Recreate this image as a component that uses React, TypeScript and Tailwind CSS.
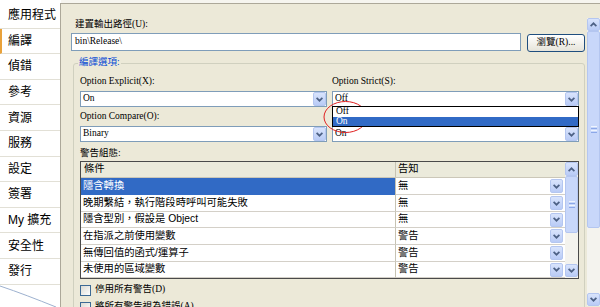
import React from "react";

function Chevron({ up = false }: { up?: boolean }) {
  return (
    <svg width="7" height="5" viewBox="0 0 7 5" className={up ? "rotate-180" : ""}>
      <path d="M0.6 0.8 L3.5 3.7 L6.4 0.8" fill="none" stroke="#4D6185" strokeWidth="1.7" />
    </svg>
  );
}

function ArrowBtn({ up = false, className = "" }: { up?: boolean; className?: string }) {
  return (
    <div
      className={
        "flex shrink-0 items-center justify-center rounded-[2px] border border-[#B4C6F0] bg-linear-to-b from-[#D9E4FC] to-[#B9CBF6] " +
        className
      }
    >
      <Chevron up={up} />
    </div>
  );
}

function Combo({ value, children }: { value: string; children?: React.ReactNode }) {
  return (
    <div className="relative flex h-[16px] items-center border border-[#7F9DB9] bg-white pl-[2px]">
      <span className="flex-1 text-[9.5px] leading-none">{value}</span>
      <ArrowBtn className="h-[14px] w-[13px]" />
      {children}
    </div>
  );
}

function Checkbox({ label }: { label: string }) {
  return (
    <div className="flex h-[14px] shrink-0 items-center gap-[4px]">
      <div className="h-[11px] w-[11px] border border-[#3D6A95] bg-linear-to-br from-[#DCDBD3] to-white" />
      <span className="text-[9.5px] leading-none">{label}</span>
    </div>
  );
}

const tabs = ["應用程式", "編譯", "偵錯", "參考", "資源", "服務", "設定", "簽署", "My 擴充", "安全性", "發行"];

const rows: [string, string][] = [
  ["隱含轉換", "無"],
  ["晚期繫結，執行階段時呼叫可能失敗", "無"],
  ["隱含型別，假設是 Object", "無"],
  ["在指派之前使用變數", "警告"],
  ["無傳回值的函式/運算子", "警告"],
  ["未使用的區域變數", "警告"],
];
const rowH = ["h-[17px]", "h-[17px]", "h-[16px]", "h-[17px]", "h-[17px]", "h-[16px]"];

export default function App() {
  return (
    <div className="relative flex h-[307px] w-[600px] overflow-hidden bg-white font-['Liberation_Serif','Noto_Sans_CJK_TC',serif] text-black">
      {/* Sidebar */}
      <div className="relative w-[61px] shrink-0 bg-white pt-[3px]">
        <div className="h-full border-r border-[#ACA899] font-['Liberation_Sans','Noto_Sans_CJK_TC',sans-serif]">
          {tabs.map((t, i) => (
            <div
              key={t}
              className={
                "flex h-[25.6px] items-center border-b border-[#E2E0D6] text-[12px] leading-none " +
                (i === 1 ? "border-l-[2px] border-l-[#E9A23B] pl-[6px]" : "pl-[8px]")
              }
            >
              {t}
            </div>
          ))}
        </div>
        <svg className="pointer-events-none absolute left-0 top-0" width="61" height="307" viewBox="0 0 61 307">
          <path d="M0 286 C 18 292, 36 299, 56 307" stroke="#9DB1CF" fill="none" />
        </svg>
      </div>

      {/* Content */}
      <div className="flex flex-1 flex-col">
        <div className="h-[3px] shrink-0 bg-[#F6F5EF]" />
        <div className="flex flex-1 overflow-hidden border-t border-[#ACA899] bg-[#ECE9D8]">
          <div className="flex w-[526px] shrink-0 flex-col overflow-hidden pl-[10px] pr-[2px] pt-[13px]">
            <div className="flex h-[15px] shrink-0 items-center pl-[4px] text-[9.5px] leading-none">建置輸出路徑(U):</div>
            <div className="mt-[1px] flex h-[19px] shrink-0 items-start gap-[6px]">
              <div className="flex h-[18px] flex-1 items-center border border-[#7F9DB9] bg-white pl-[3px] text-[9.5px] leading-none">
                bin\Release\
              </div>
              <div className="mt-[1px] flex h-[18px] w-[58px] items-center justify-center rounded-[3px] border border-[#1F4E7E] bg-linear-to-b from-white to-[#E6E4DA] text-[9.5px] leading-none">
                瀏覽(R)...
              </div>
            </div>

            {/* Group box */}
            <div className="relative ml-[2px] mt-[11px] shrink-0 rounded-[3px] border border-[#D0D0BF] pb-[40px] pl-[6px] pr-[5px] pt-[10px]">
              <div className="absolute left-[4px] top-[-9px] flex h-[15px] items-center bg-[#ECE9D8] px-[1px] text-[9.5px] leading-none text-[#0046D5]">
                編譯選項:
              </div>
              <div className="grid grid-cols-2 gap-x-[5px]">
                <div className="flex h-[15px] items-center text-[9.5px] leading-none">Option Explicit(X):</div>
                <div className="flex h-[15px] items-center text-[9.5px] leading-none">Option Strict(S):</div>
                <div className="mt-[2px]">
                  <Combo value="On" />
                </div>
                <div className="mt-[2px]">
                  <Combo value="Off">
                    <div className="absolute left-[-1px] right-[-1px] top-[14px] z-10 flex flex-col border border-black bg-white text-[9.5px] leading-none">
                      <div className="flex h-[10px] items-center pl-[3px]">Off</div>
                      <div className="flex h-[9px] items-center bg-[#316AC5] pl-[3px] text-white">On</div>
                    </div>
                  </Combo>
                </div>
                <div className="mt-[2px] flex h-[15px] items-center text-[9.5px] leading-none">Option Compare(O):</div>
                <div className="mt-[2px]" />
                <div className="mt-[2px]">
                  <Combo value="Binary" />
                </div>
                <div className="mt-[2px]">
                  <Combo value="On" />
                </div>
              </div>

              <div className="mt-[4px] flex h-[15px] items-center text-[9.5px] leading-none">警告組態:</div>

              {/* Table */}
              <div className="flex h-[118px] border border-[#4A4A4A] bg-white font-['Liberation_Sans','Noto_Sans_CJK_TC',sans-serif] text-[10.3px] leading-none">
                <div className="flex flex-1 flex-col">
                  <div className="flex h-[16px] shrink-0 border-b border-[#CBC7B8] bg-[#EBEADB]">
                    <div className="flex w-[315px] items-center border-r border-[#C7C3B3] pl-[3px]">條件</div>
                    <div className="flex flex-1 items-center pl-[2px]">告知</div>
                  </div>
                  {rows.map(([a, b], i) => (
                    <div key={a} className={"flex shrink-0 " + rowH[i]}>
                      <div
                        className={
                          "flex w-[315px] items-center border-r border-[#C7C3B3] pl-[2px] " +
                          (i === 0 ? "bg-[#316AC5] text-white" : "border-b border-b-[#D4D0C8]")
                        }
                      >
                        {a}
                      </div>
                      <div className="flex flex-1 items-center border-b border-[#D4D0C8] pl-[2px] pr-[2px]">
                        <span className="flex-1">{b}</span>
                        <ArrowBtn className="h-[14px] w-[13px]" />
                      </div>
                    </div>
                  ))}
                </div>
                <div className="flex w-[13px] flex-col bg-[#F4F3EE]">
                  <ArrowBtn up className="h-[14px] w-[13px]" />
                  <div className="flex h-[57px] shrink-0 flex-col items-center justify-center gap-[1px] rounded-[2px] border border-[#B4C6F0] bg-[#C8D7FA]">
                    <div className="h-px w-[6px] bg-[#EEF4FE]" />
                    <div className="h-px w-[6px] bg-[#8CA8E8]" />
                    <div className="h-px w-[6px] bg-[#EEF4FE]" />
                    <div className="h-px w-[6px] bg-[#8CA8E8]" />
                  </div>
                  <div className="flex-1" />
                  <ArrowBtn className="mb-[1px] h-[13px] w-[13px]" />
                </div>
              </div>

              <div className="mt-[4px]">
                <Checkbox label="停用所有警告(D)" />
              </div>
              <div className="mt-[3px]">
                <Checkbox label="將所有警告視為錯誤(A)" />
              </div>
            </div>
          </div>

          {/* Main scrollbar */}
          <div className="mt-[14px] mb-[1px] flex w-[13px] flex-col bg-[#F4F3EE]">
            <ArrowBtn up className="h-[13px] w-[13px]" />
            <div className="flex h-[197px] shrink-0 flex-col items-center justify-center gap-[1px] rounded-[2px] border border-[#B4C6F0] bg-[#C8D7FA]">
              <div className="h-px w-[6px] bg-[#EEF4FE]" />
              <div className="h-px w-[6px] bg-[#8CA8E8]" />
              <div className="h-px w-[6px] bg-[#EEF4FE]" />
              <div className="h-px w-[6px] bg-[#8CA8E8]" />
            </div>
            <div className="flex-1" />
            <ArrowBtn className="h-[13px] w-[13px]" />
          </div>
        </div>
      </div>

      {/* Red annotation ellipse */}
      <svg className="pointer-events-none absolute left-0 top-0" width="600" height="307" viewBox="0 0 600 307">
        <ellipse cx="345.5" cy="117" rx="21.5" ry="15.5" fill="none" stroke="#E02020" strokeWidth="1" />
      </svg>
    </div>
  );
}
